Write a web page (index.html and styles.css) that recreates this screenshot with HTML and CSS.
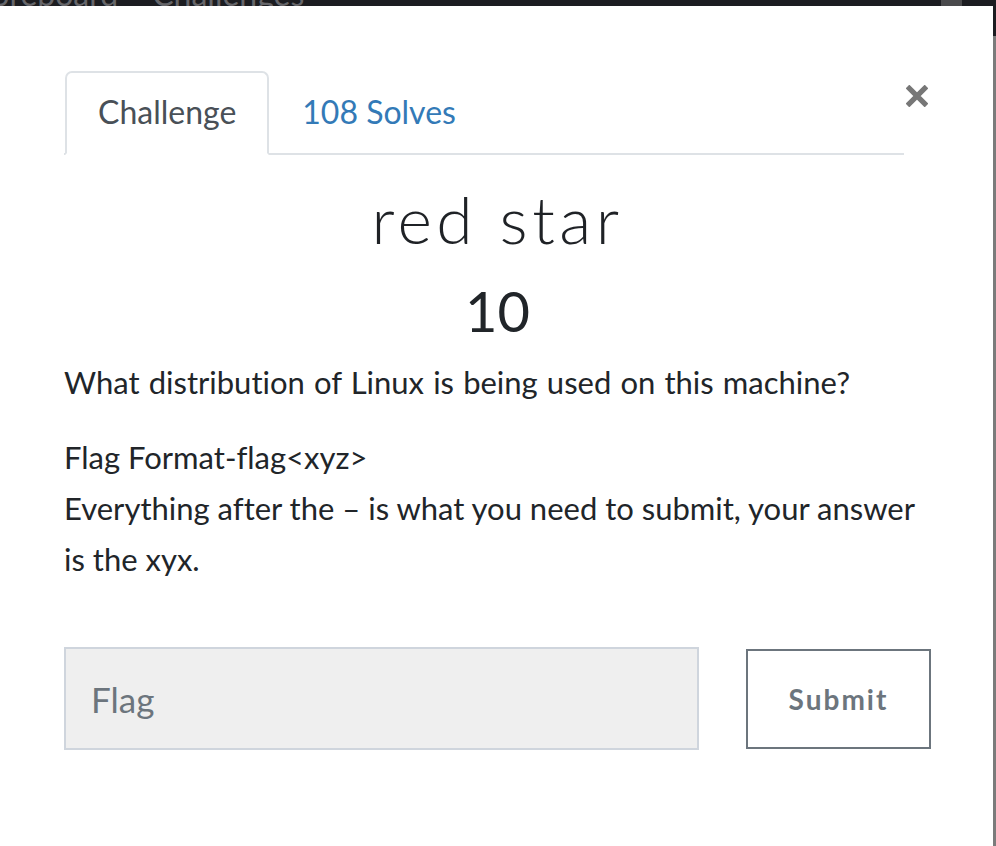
FILE: index.html
```html
<!DOCTYPE html>
<html lang="en">
<head>
<meta charset="utf-8">
<title>red star</title>
<link rel="stylesheet" href="styles.css">
</head>
<body>
<header class="navbar">
  <span class="nav-link first">Scoreboard</span>
  <span class="nav-link">Challenges</span>
  <span class="nav-square"></span>
</header>

<div class="modal">
  <div class="modal-body">
    <div class="modal-head">
      <nav class="nav-tabs">
        <span class="tab active">Challenge</span>
        <span class="tab link">108 Solves</span>
      </nav>
      <button class="close" type="button" aria-label="Close">
        <svg width="22" height="22" viewBox="0 0 22 22" aria-hidden="true">
          <path d="M1.5 1.5 L20.5 20.5 M20.5 1.5 L1.5 20.5" stroke="#777" stroke-width="5.2" fill="none"/>
        </svg>
      </button>
    </div>

    <h2 class="challenge-name">red star</h2>
    <h3 class="challenge-value">10</h3>

    <div class="description">
      <p class="lead-line">What distribution of Linux is being used on this machine?</p>
      <p>Flag Format-flag&lt;xyz&gt;<br>Everything after the – is what you need to submit, your answer is the xyx.</p>
    </div>

    <form class="flag-form">
      <input class="flag-input" type="text" placeholder="Flag">
      <button class="submit" type="button">Submit</button>
    </form>
  </div>
</div>
</body>
</html>
```

FILE: styles.css
```css
* {
  box-sizing: border-box;
}

html, body {
  margin: 0;
  padding: 0;
  height: 100%;
}

body {
  background: #7b7b7b;
  font-family: "Lato", "Liberation Sans", sans-serif;
  color: #212529;
  overflow: hidden;
  font-variant-ligatures: none;
}

.navbar {
  height: 36px;
  background: #1c1d21;
  display: flex;
  align-items: flex-start;
  overflow: hidden;
}

.nav-link {
  font-size: 32px;
  line-height: 28px;
  margin-top: -20px;
  color: #66666a;
  white-space: nowrap;
}

.nav-link.first {
  margin-left: -41px;
}

.nav-link + .nav-link {
  margin-left: 34px;
}

.nav-square {
  width: 21px;
  height: 10px;
  background: #4a4a4c;
  margin-left: auto;
  margin-right: 34px;
}

.modal {
  position: fixed;
  top: 6px;
  left: 0;
  width: 993px;
  bottom: 0;
  background: #ffffff;
}

.modal-body {
  padding: 65px 62px 0 64px;
}

.modal-head {
  display: flex;
  align-items: flex-start;
}

.nav-tabs {
  flex: 1;
  display: flex;
  border-bottom: 2px solid #dee2e6;
  height: 84px;
}

.tab {
  height: 84px;
  padding: 0 31px;
  font-size: 32px;
  line-height: 78px;
  border: 2px solid transparent;
  border-radius: 7px 7px 0 0;
  white-space: nowrap;
}

.tab.active {
  color: #495057;
  background: #fff;
  border-color: #dee2e6 #dee2e6 #fff;
  margin-left: 1px;
}

.tab.link {
  color: #337ab7;
}

.close {
  width: 27px;
  height: 30px;
  margin-top: 14px;
  padding: 0 0 0 2px;
  border: 0;
  background: transparent;
  display: flex;
  align-items: flex-start;
}

.challenge-name {
  margin: 22px 0 0;
  text-align: center;
  font-weight: 300;
  font-size: 66px;
  line-height: 84px;
  letter-spacing: 4.5px;
  color: #1f2226;
}

.challenge-value {
  margin: 16px 0 0;
  text-align: center;
  font-weight: 400;
  font-size: 56px;
  line-height: 67px;
  color: #212529;
}

.description {
  margin-top: 13px;
}

.description p {
  margin: 0 0 24px;
  font-size: 31px;
  line-height: 51px;
}

.description .lead-line {
  word-spacing: 1.2px;
}

.flag-form {
  margin-top: 62px;
  display: flex;
  align-items: center;
  gap: 47px;
}

.flag-input {
  width: 635px;
  height: 103px;
  border: 2px solid #cfd5dd;
  background: #efefef;
  padding: 0 25px;
  font-family: "Lato", "Liberation Sans", sans-serif;
  font-size: 35px;
  color: #495057;
  border-radius: 0;
  outline: none;
}

.flag-input::placeholder {
  color: #6c757d;
  opacity: 1;
}

.submit {
  width: 185px;
  height: 100px;
  border: 2px solid #6c757d;
  background: #fff;
  color: #6c757d;
  font-family: "Lato", "Liberation Sans", sans-serif;
  font-weight: 700;
  font-size: 28px;
  letter-spacing: 2px;
  border-radius: 0;
  padding: 0;
}
```
